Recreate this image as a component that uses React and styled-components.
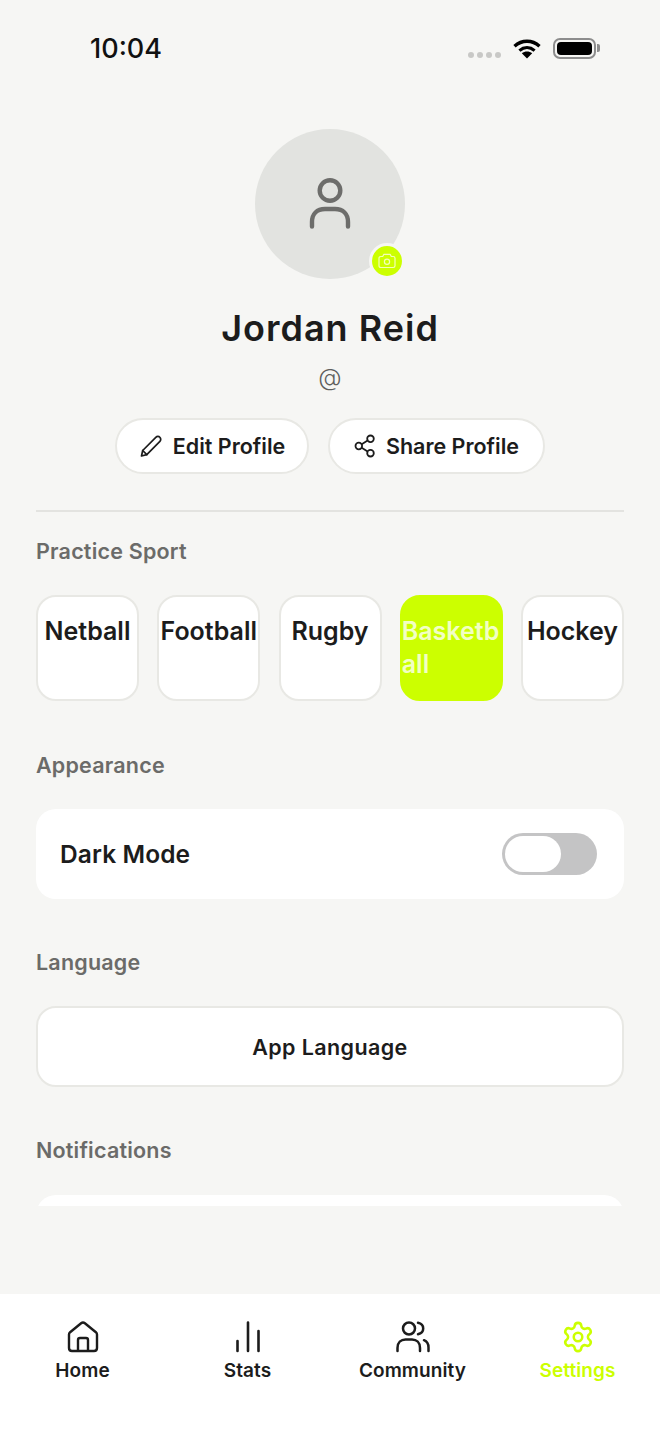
import React from 'react';
import styled, { createGlobalStyle } from 'styled-components';

const LIME = '#ccff00';
const INK = '#1c1c1c';
const PAGE = '#f6f6f4';
const EDGE = '#e8e8e4';

const GlobalStyle = createGlobalStyle`
  html, body {
    margin: 0;
    padding: 0;
    background: ${PAGE};
  }
  * {
    box-sizing: border-box;
  }
`;

const sports = ['Netball', 'Football', 'Rugby', 'Basketball', 'Hockey'];

const App = () => {
  return (
    <Screen>
      <GlobalStyle />
      <StatusBar>
        <Time>10:04</Time>
        <StatusIcons>
          <Signal>
            <i /><i /><i /><i />
          </Signal>
          <svg width="28" height="20" viewBox="0 0 28 20">
            <path d="M1.5 7.2C8.8 .6 19.2 .6 26.5 7.2" fill="none" stroke="#000" strokeWidth="3.4" />
            <path d="M6.4 11.6c4.6-3.9 10.6-3.9 15.2 0" fill="none" stroke="#000" strokeWidth="3.2" />
            <path d="M8.8 14.2c3-2.2 7.4-2.2 10.4 0L14 19.6z" fill="#000" />
          </svg>
          <Battery>
            <BatteryFill />
            <BatteryCap />
          </Battery>
        </StatusIcons>
      </StatusBar>

      <Scroll>
        <Profile>
          <Avatar>
            <svg width="44" height="52" viewBox="0 0 44 52" fill="none" stroke="#6d6d6b" strokeWidth="4.4" strokeLinecap="round">
              <circle cx="22" cy="12.5" r="10.3" />
              <path d="M4 48.5V44c0-8 5-13 13-13h10c8 0 13 5 13 13v4.5" />
            </svg>
            <CameraBadge>
              <svg width="18" height="16" viewBox="0 0 18 16" fill="none" stroke="#f3ffb8" strokeWidth="1.2" strokeLinejoin="round">
                <path d="M1 5.2c0-1 .7-1.7 1.7-1.7h2l1.2-2.2h6.2l1.2 2.2h2c1 0 1.7.7 1.7 1.7v7.6c0 1-.7 1.7-1.7 1.7H2.700c-1 0-1.700-.7-1.700-1.700z" />
                <circle cx="9" cy="8.800" r="2.600" />
              </svg>
            </CameraBadge>
          </Avatar>
          <Name>Jordan Reid</Name>
          <Handle>@</Handle>
          <Actions>
            <PillButton $width={194}>
              <svg width="24" height="24" viewBox="0 0 24 24" fill="none" stroke={INK} strokeWidth="1.7" strokeLinejoin="round" strokeLinecap="round">
                <path d="M2.500 22l1.200-5.500L16.800 3.300c1.200-1.200 3-1.200 4.100 0 1.100 1.100 1.100 2.900 0 4L7.800 20.600z" />
                <path d="M3.700 16.500l4.100 4.100" />
              </svg>
              Edit Profile
            </PillButton>
            <PillButton $width={217}>
              <svg width="22" height="24" viewBox="0 0 22 24" fill="none" stroke={INK} strokeWidth="1.800">
                <circle cx="16.500" cy="4.800" r="3.300" />
                <circle cx="4.800" cy="12" r="3.300" />
                <circle cx="16.500" cy="19.200" r="3.300" />
                <path d="M7.700 10.300l5.900-3.700M7.700 13.700l5.900 3.700" />
              </svg>
              Share Profile
            </PillButton>
          </Actions>
        </Profile>

        <Divider />

        <SectionLabel $top={26}>Practice Sport</SectionLabel>
        <SportGrid>
          {sports.map((sport) => (
            <SportChip key={sport} $active={sport === 'Basketball'}>{sport}</SportChip>
          ))}
        </SportGrid>

        <SectionLabel $top={51}>Appearance</SectionLabel>
        <ToggleCard>
          <ToggleLabel>Dark Mode</ToggleLabel>
          <Toggle>
            <Knob />
          </Toggle>
        </ToggleCard>

        <SectionLabel $top={50}>Language</SectionLabel>
        <LanguageButton>App Language</LanguageButton>

        <SectionLabel $top={50}>Notifications</SectionLabel>
        <ClippedCard />
      </Scroll>

      <NavBar>
        <NavItem>
          <svg width="34" height="34" viewBox="0 0 34 34" fill="none" stroke={INK} strokeWidth="2.400" strokeLinejoin="round">
            <path d="M3 14.500c0-1 .4-1.700 1.100-2.300l11-9c1.100-.9 2.700-.9 3.800 0l11 9c.7.600 1.100 1.300 1.100 2.300V28c0 1.700-1.300 3-3 3H6c-1.700 0-3-1.300-3-3z" />
            <path d="M12 31V20c0-1.100.9-2 2-2h6c1.100 0 2 .9 2 2v11" />
          </svg>
          <NavLabel>Home</NavLabel>
        </NavItem>
        <NavItem>
          <svg width="34" height="34" viewBox="0 0 34 34" fill="none" stroke={INK} strokeWidth="2.600" strokeLinecap="round">
            <path d="M6.500 31V21M17 31V2.500M27.500 31V11" />
          </svg>
          <NavLabel>Stats</NavLabel>
        </NavItem>
        <NavItem>
          <svg width="34" height="34" viewBox="0 0 34 34" fill="none" stroke={INK} strokeWidth="2.500" strokeLinecap="round">
            <circle cx="13" cy="8.500" r="6" />
            <path d="M22 2.800c3.800 .8 5.200 3.200 5.200 5.700s-1.400 4.900-5.200 5.700" />
            <path d="M1.500 31v-3c0-5.500 3.500-8.500 8-8.500h6.500c4.500 0 8 3 8 8.500v3" />
            <path d="M28 20.200c3 1.200 4.500 3.800 4.500 7.300V31" />
          </svg>
          <NavLabel>Community</NavLabel>
        </NavItem>
        <NavItem>
          <svg width="34" height="34" viewBox="0 0 24 24" fill="none" stroke={LIME} strokeWidth="1.800" strokeLinejoin="round">
            <path d="M9.671 4.136a2.34 2.34 0 0 1 4.659 0 2.34 2.34 0 0 0 3.319 1.915 2.34 2.34 0 0 1 2.33 4.033 2.34 2.34 0 0 0 0 3.831 2.34 2.34 0 0 1-2.33 4.033 2.34 2.34 0 0 0-3.319 1.915 2.34 2.34 0 0 1-4.659 0 2.34 2.34 0 0 0-3.32-1.915 2.34 2.34 0 0 1-2.33-4.033 2.34 2.34 0 0 0 0-3.831A2.34 2.34 0 0 1 6.35 6.051a2.34 2.34 0 0 0 3.32-1.915" />
            <circle cx="12" cy="12" r="3" />
          </svg>
          <NavLabel $active>Settings</NavLabel>
        </NavItem>
      </NavBar>
    </Screen>
  );
};

const Screen = styled.div`
  width: 660px;
  height: 1434px;
  display: flex;
  flex-direction: column;
  overflow: hidden;
  background: ${PAGE};
  color: ${INK};
  font-family: Inter, "Noto Sans", "Liberation Sans", sans-serif;
`;

const StatusBar = styled.div`
  height: 96px;
  flex: none;
  display: flex;
  align-items: flex-start;
  justify-content: space-between;
  padding: 32px 62px 0 90px;
`;

const Time = styled.div`
  font-size: 27px;
  line-height: 33px;
  font-weight: 500;
  color: #111;
`;

const StatusIcons = styled.div`
  display: flex;
  align-items: center;
  gap: 12px;
  margin-top: 6px;
`;

const Signal = styled.div`
  display: flex;
  gap: 3px;
  margin-top: 12px;
  i {
    width: 6px;
    height: 6px;
    border-radius: 50%;
    background: #c8c8c6;
  }
`;

const Battery = styled.div`
  position: relative;
  width: 43px;
  height: 21px;
  padding: 2px;
  border: 2px solid #8d8d8d;
  border-radius: 7px;
  margin-right: 2px;
`;

const BatteryFill = styled.div`
  height: 100%;
  background: #000;
  border-radius: 4px;
`;

const BatteryCap = styled.div`
  position: absolute;
  right: -6px;
  top: 4px;
  width: 3px;
  height: 8px;
  border-radius: 0 2px 2px 0;
  background: #8d8d8d;
`;

const Scroll = styled.div`
  height: 1110px;
  flex: none;
  overflow: hidden;
  padding: 33px 36px 0;
`;

const Profile = styled.div`
  display: flex;
  flex-direction: column;
  align-items: center;
`;

const Avatar = styled.div`
  position: relative;
  width: 150px;
  height: 150px;
  border-radius: 50%;
  background: #e2e3e0;
  display: flex;
  align-items: center;
  justify-content: center;
`;

const CameraBadge = styled.div`
  position: absolute;
  right: 0;
  bottom: 0;
  width: 36px;
  height: 36px;
  border-radius: 50%;
  background: ${LIME};
  border: 3px solid ${PAGE};
  display: flex;
  align-items: center;
  justify-content: center;
`;

const Name = styled.h1`
  margin: 26px 0 0;
  font-size: 36px;
  line-height: 46px;
  font-weight: 600;
  letter-spacing: 1px;
`;

const Handle = styled.div`
  margin-top: 14px;
  font-size: 24px;
  line-height: 26px;
  font-weight: 300;
  color: #5f5f5d;
`;

const Actions = styled.div`
  display: flex;
  gap: 19px;
  margin-top: 27px;
`;

const PillButton = styled.div`
  width: ${(p) => p.$width}px;
  height: 56px;
  display: flex;
  align-items: center;
  justify-content: center;
  gap: 10px;
  background: #fff;
  border: 2px solid ${EDGE};
  border-radius: 28px;
  font-size: 21.5px;
  font-weight: 600;
`;

const Divider = styled.div`
  height: 2px;
  margin-top: 36px;
  background: #e3e3e0;
`;

const SectionLabel = styled.div`
  margin-top: ${(p) => p.$top}px;
  font-size: 21.5px;
  line-height: 26px;
  font-weight: 600;
  letter-spacing: 0.2px;
  color: #6b6b69;
`;

const SportGrid = styled.div`
  display: grid;
  grid-template-columns: repeat(5, 103px);
  justify-content: space-between;
  margin-top: 31px;
`;

const SportChip = styled.div`
  height: 106px;
  padding: 18px 0 0;
  overflow: hidden;
  overflow-wrap: anywhere;
  border-radius: 20px;
  font-size: 25px;
  line-height: 33px;
  font-weight: 600;
  text-align: ${(p) => (p.$active ? 'left' : 'center')};
  background: ${(p) => (p.$active ? LIME : '#fff')};
  color: ${(p) => (p.$active ? '#f2ffc4' : INK)};
  border: 2px solid ${(p) => (p.$active ? LIME : EDGE)};
`;

const ToggleCard = styled.div`
  height: 90px;
  margin-top: 31px;
  padding: 0 27px 0 24px;
  display: flex;
  align-items: center;
  justify-content: space-between;
  background: #fff;
  border-radius: 20px;
`;

const ToggleLabel = styled.div`
  font-size: 24.5px;
  font-weight: 600;
  letter-spacing: 0.1px;
`;

const Toggle = styled.div`
  width: 95px;
  height: 42px;
  padding: 3px;
  border-radius: 21px;
  background: #c4c4c5;
`;

const Knob = styled.div`
  width: 56px;
  height: 36px;
  border-radius: 18px;
  background: #fff;
`;

const LanguageButton = styled.div`
  height: 81px;
  margin-top: 31px;
  display: flex;
  align-items: center;
  justify-content: center;
  background: #fff;
  border: 2px solid ${EDGE};
  border-radius: 20px;
  font-size: 21.5px;
  font-weight: 600;
  letter-spacing: 0.4px;
`;

const ClippedCard = styled.div`
  height: 90px;
  margin-top: 32px;
  background: #fff;
  border-radius: 20px;
`;

const NavBar = styled.div`
  height: 140px;
  margin-top: 88px;
  flex: none;
  display: grid;
  grid-template-columns: repeat(4, 165px);
  padding-top: 26px;
  background: #fff;
`;

const NavItem = styled.div`
  display: flex;
  flex-direction: column;
  align-items: center;
  gap: 5px;
`;

const NavLabel = styled.div`
  font-size: 19px;
  line-height: 24px;
  font-weight: 600;
  letter-spacing: 0.1px;
  color: ${(p) => (p.$active ? LIME : INK)};
`;

export default App;
